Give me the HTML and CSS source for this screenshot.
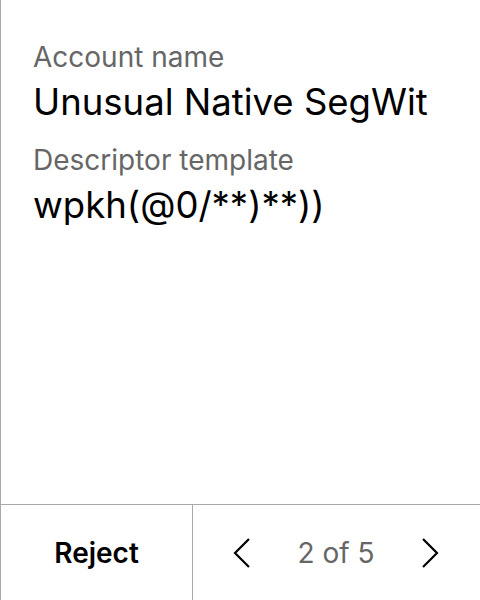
FILE: index.html
```html
<!DOCTYPE html>
<html>
<head>
<meta charset="utf-8">
<link rel="stylesheet" href="styles.css">
</head>
<body>
<div class="screen">
  <main class="content">
    <div class="field">
      <div class="label">Account name</div>
      <div class="value">Unusual Native SegWit</div>
    </div>
    <div class="field">
      <div class="label">Descriptor template</div>
      <div class="value">wpkh(@0/**)**))</div>
    </div>
  </main>
  <footer class="footer">
    <div class="reject">Reject</div>
    <div class="pager">
      <svg class="chev" width="18" height="32" viewBox="0 0 18 32"><path d="M16 2 L2 16 L16 30" fill="none" stroke="#000" stroke-width="2.2"/></svg>
      <span class="count">2 of 5</span>
      <svg class="chev" width="18" height="32" viewBox="0 0 18 32"><path d="M2 2 L16 16 L2 30" fill="none" stroke="#000" stroke-width="2.2"/></svg>
    </div>
  </footer>
</div>
</body>
</html>
```
FILE: styles.css
```css
html, body { margin: 0; padding: 0; background: #fff; }
body { font-family: Inter, "Noto Sans", sans-serif; }
.screen {
  width: 480px; height: 600px; box-sizing: border-box;
  border-left: 1px solid #a9a9a9;
  display: flex; flex-direction: column;
}
.content { flex: 1; padding: 39px 0 0 32px; display: flex; flex-direction: column; gap: 16px; }
.label { font-size: 28px; line-height: 36px; color: #666; margin-bottom: 3px; }
.value { font-size: 36.5px; line-height: 48px; color: #000; }
.footer {
  height: 95px; border-top: 1px solid #a9a9a9; display: flex;
}
.reject {
  width: 191px; border-right: 1px solid #a9a9a9;
  display: flex; align-items: center; justify-content: center;
  font-size: 28px; font-weight: 600; color: #000;
}
.pager { flex: 1; display: flex; align-items: center; justify-content: space-between; padding: 0 41px 0 40px; }
.count { font-size: 28px; color: #666; }
```
